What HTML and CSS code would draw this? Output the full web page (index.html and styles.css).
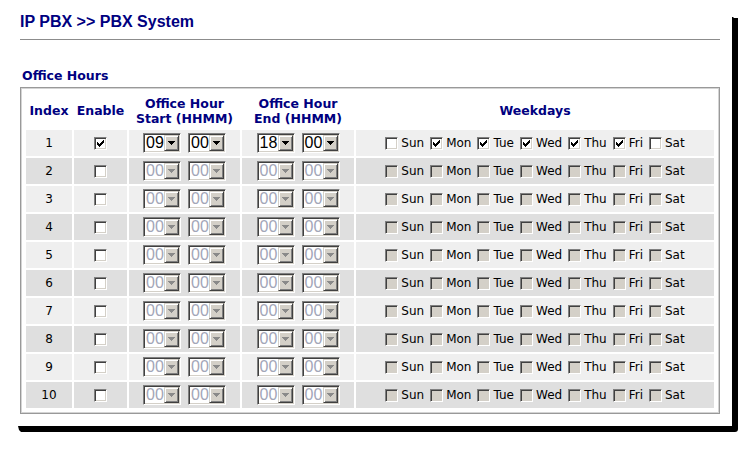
FILE: index.html
```html
<!DOCTYPE html>
<html>
<head>
<meta charset="utf-8">
<title>IP PBX - PBX System</title>
<link rel="stylesheet" href="styles.css">
</head>
<body>
<svg class="defs" width="0" height="0" aria-hidden="true">
  <symbol id="arrow" viewBox="0 0 7 4"><path d="M0 0h7v1h-1v1h-1v1h-1v1h-1v-1h-1v-1h-1v-1h-1z"/></symbol>
  <symbol id="tick" viewBox="0 0 7 7"><path d="M0 2h1v1h1v1h1v-1h1v-1h1v-1h1v-1h1v3h-1v1h-1v1h-1v1h-1v1h-1v-1h-1v-1h-1v-1h-1z"/></symbol>
</svg>
<div class="sheet">
<div class="page">
  <h1 class="title">IP PBX &gt;&gt; PBX System</h1>
  <hr class="rule">
  <div class="section">Office Hours</div>
  <div class="frame">
    <table class="hours">
      <colgroup><col class="c-idx"><col class="c-en"><col class="c-start"><col class="c-end"><col class="c-days"></colgroup>
      <thead>
        <tr><th>Index</th><th>Enable</th><th>Office Hour<br>Start (HHMM)</th><th>Office Hour<br>End (HHMM)</th><th>Weekdays</th></tr>
      </thead>
      <tbody>
        <tr>
          <td>1</td>
          <td><span class="cb on"><svg class="tk"><use href="#tick"/></svg></span></td>
          <td><div class="pair"><span class="sel"><span class="val">09</span><span class="btn"><svg class="ar"><use href="#arrow"/></svg></span></span><span class="sel"><span class="val">00</span><span class="btn"><svg class="ar"><use href="#arrow"/></svg></span></span></div></td>
          <td><div class="pair"><span class="sel"><span class="val">18</span><span class="btn"><svg class="ar"><use href="#arrow"/></svg></span></span><span class="sel"><span class="val">00</span><span class="btn"><svg class="ar"><use href="#arrow"/></svg></span></span></div></td>
          <td><div class="days">
            <span class="day"><span class="cb"></span>Sun</span>
            <span class="day"><span class="cb on"><svg class="tk"><use href="#tick"/></svg></span>Mon</span>
            <span class="day"><span class="cb on"><svg class="tk"><use href="#tick"/></svg></span>Tue</span>
            <span class="day"><span class="cb on"><svg class="tk"><use href="#tick"/></svg></span>Wed</span>
            <span class="day"><span class="cb on"><svg class="tk"><use href="#tick"/></svg></span>Thu</span>
            <span class="day"><span class="cb on"><svg class="tk"><use href="#tick"/></svg></span>Fri</span>
            <span class="day"><span class="cb"></span>Sat</span>
          </div></td>
        </tr>
        <tr>
          <td>2</td><td><span class="cb"></span></td>
          <td><div class="pair"><span class="sel off"><span class="val">00</span><span class="btn"><svg class="ar"><use href="#arrow"/></svg></span></span><span class="sel off"><span class="val">00</span><span class="btn"><svg class="ar"><use href="#arrow"/></svg></span></span></div></td>
          <td><div class="pair"><span class="sel off"><span class="val">00</span><span class="btn"><svg class="ar"><use href="#arrow"/></svg></span></span><span class="sel off"><span class="val">00</span><span class="btn"><svg class="ar"><use href="#arrow"/></svg></span></span></div></td>
          <td><div class="days"><span class="day"><span class="cb off"></span>Sun</span><span class="day"><span class="cb off"></span>Mon</span><span class="day"><span class="cb off"></span>Tue</span><span class="day"><span class="cb off"></span>Wed</span><span class="day"><span class="cb off"></span>Thu</span><span class="day"><span class="cb off"></span>Fri</span><span class="day"><span class="cb off"></span>Sat</span></div></td>
        </tr>
        <tr>
          <td>3</td><td><span class="cb"></span></td>
          <td><div class="pair"><span class="sel off"><span class="val">00</span><span class="btn"><svg class="ar"><use href="#arrow"/></svg></span></span><span class="sel off"><span class="val">00</span><span class="btn"><svg class="ar"><use href="#arrow"/></svg></span></span></div></td>
          <td><div class="pair"><span class="sel off"><span class="val">00</span><span class="btn"><svg class="ar"><use href="#arrow"/></svg></span></span><span class="sel off"><span class="val">00</span><span class="btn"><svg class="ar"><use href="#arrow"/></svg></span></span></div></td>
          <td><div class="days"><span class="day"><span class="cb off"></span>Sun</span><span class="day"><span class="cb off"></span>Mon</span><span class="day"><span class="cb off"></span>Tue</span><span class="day"><span class="cb off"></span>Wed</span><span class="day"><span class="cb off"></span>Thu</span><span class="day"><span class="cb off"></span>Fri</span><span class="day"><span class="cb off"></span>Sat</span></div></td>
        </tr>
        <tr>
          <td>4</td><td><span class="cb"></span></td>
          <td><div class="pair"><span class="sel off"><span class="val">00</span><span class="btn"><svg class="ar"><use href="#arrow"/></svg></span></span><span class="sel off"><span class="val">00</span><span class="btn"><svg class="ar"><use href="#arrow"/></svg></span></span></div></td>
          <td><div class="pair"><span class="sel off"><span class="val">00</span><span class="btn"><svg class="ar"><use href="#arrow"/></svg></span></span><span class="sel off"><span class="val">00</span><span class="btn"><svg class="ar"><use href="#arrow"/></svg></span></span></div></td>
          <td><div class="days"><span class="day"><span class="cb off"></span>Sun</span><span class="day"><span class="cb off"></span>Mon</span><span class="day"><span class="cb off"></span>Tue</span><span class="day"><span class="cb off"></span>Wed</span><span class="day"><span class="cb off"></span>Thu</span><span class="day"><span class="cb off"></span>Fri</span><span class="day"><span class="cb off"></span>Sat</span></div></td>
        </tr>
        <tr>
          <td>5</td><td><span class="cb"></span></td>
          <td><div class="pair"><span class="sel off"><span class="val">00</span><span class="btn"><svg class="ar"><use href="#arrow"/></svg></span></span><span class="sel off"><span class="val">00</span><span class="btn"><svg class="ar"><use href="#arrow"/></svg></span></span></div></td>
          <td><div class="pair"><span class="sel off"><span class="val">00</span><span class="btn"><svg class="ar"><use href="#arrow"/></svg></span></span><span class="sel off"><span class="val">00</span><span class="btn"><svg class="ar"><use href="#arrow"/></svg></span></span></div></td>
          <td><div class="days"><span class="day"><span class="cb off"></span>Sun</span><span class="day"><span class="cb off"></span>Mon</span><span class="day"><span class="cb off"></span>Tue</span><span class="day"><span class="cb off"></span>Wed</span><span class="day"><span class="cb off"></span>Thu</span><span class="day"><span class="cb off"></span>Fri</span><span class="day"><span class="cb off"></span>Sat</span></div></td>
        </tr>
        <tr>
          <td>6</td><td><span class="cb"></span></td>
          <td><div class="pair"><span class="sel off"><span class="val">00</span><span class="btn"><svg class="ar"><use href="#arrow"/></svg></span></span><span class="sel off"><span class="val">00</span><span class="btn"><svg class="ar"><use href="#arrow"/></svg></span></span></div></td>
          <td><div class="pair"><span class="sel off"><span class="val">00</span><span class="btn"><svg class="ar"><use href="#arrow"/></svg></span></span><span class="sel off"><span class="val">00</span><span class="btn"><svg class="ar"><use href="#arrow"/></svg></span></span></div></td>
          <td><div class="days"><span class="day"><span class="cb off"></span>Sun</span><span class="day"><span class="cb off"></span>Mon</span><span class="day"><span class="cb off"></span>Tue</span><span class="day"><span class="cb off"></span>Wed</span><span class="day"><span class="cb off"></span>Thu</span><span class="day"><span class="cb off"></span>Fri</span><span class="day"><span class="cb off"></span>Sat</span></div></td>
        </tr>
        <tr>
          <td>7</td><td><span class="cb"></span></td>
          <td><div class="pair"><span class="sel off"><span class="val">00</span><span class="btn"><svg class="ar"><use href="#arrow"/></svg></span></span><span class="sel off"><span class="val">00</span><span class="btn"><svg class="ar"><use href="#arrow"/></svg></span></span></div></td>
          <td><div class="pair"><span class="sel off"><span class="val">00</span><span class="btn"><svg class="ar"><use href="#arrow"/></svg></span></span><span class="sel off"><span class="val">00</span><span class="btn"><svg class="ar"><use href="#arrow"/></svg></span></span></div></td>
          <td><div class="days"><span class="day"><span class="cb off"></span>Sun</span><span class="day"><span class="cb off"></span>Mon</span><span class="day"><span class="cb off"></span>Tue</span><span class="day"><span class="cb off"></span>Wed</span><span class="day"><span class="cb off"></span>Thu</span><span class="day"><span class="cb off"></span>Fri</span><span class="day"><span class="cb off"></span>Sat</span></div></td>
        </tr>
        <tr>
          <td>8</td><td><span class="cb"></span></td>
          <td><div class="pair"><span class="sel off"><span class="val">00</span><span class="btn"><svg class="ar"><use href="#arrow"/></svg></span></span><span class="sel off"><span class="val">00</span><span class="btn"><svg class="ar"><use href="#arrow"/></svg></span></span></div></td>
          <td><div class="pair"><span class="sel off"><span class="val">00</span><span class="btn"><svg class="ar"><use href="#arrow"/></svg></span></span><span class="sel off"><span class="val">00</span><span class="btn"><svg class="ar"><use href="#arrow"/></svg></span></span></div></td>
          <td><div class="days"><span class="day"><span class="cb off"></span>Sun</span><span class="day"><span class="cb off"></span>Mon</span><span class="day"><span class="cb off"></span>Tue</span><span class="day"><span class="cb off"></span>Wed</span><span class="day"><span class="cb off"></span>Thu</span><span class="day"><span class="cb off"></span>Fri</span><span class="day"><span class="cb off"></span>Sat</span></div></td>
        </tr>
        <tr>
          <td>9</td><td><span class="cb"></span></td>
          <td><div class="pair"><span class="sel off"><span class="val">00</span><span class="btn"><svg class="ar"><use href="#arrow"/></svg></span></span><span class="sel off"><span class="val">00</span><span class="btn"><svg class="ar"><use href="#arrow"/></svg></span></span></div></td>
          <td><div class="pair"><span class="sel off"><span class="val">00</span><span class="btn"><svg class="ar"><use href="#arrow"/></svg></span></span><span class="sel off"><span class="val">00</span><span class="btn"><svg class="ar"><use href="#arrow"/></svg></span></span></div></td>
          <td><div class="days"><span class="day"><span class="cb off"></span>Sun</span><span class="day"><span class="cb off"></span>Mon</span><span class="day"><span class="cb off"></span>Tue</span><span class="day"><span class="cb off"></span>Wed</span><span class="day"><span class="cb off"></span>Thu</span><span class="day"><span class="cb off"></span>Fri</span><span class="day"><span class="cb off"></span>Sat</span></div></td>
        </tr>
        <tr>
          <td>10</td><td><span class="cb"></span></td>
          <td><div class="pair"><span class="sel off"><span class="val">00</span><span class="btn"><svg class="ar"><use href="#arrow"/></svg></span></span><span class="sel off"><span class="val">00</span><span class="btn"><svg class="ar"><use href="#arrow"/></svg></span></span></div></td>
          <td><div class="pair"><span class="sel off"><span class="val">00</span><span class="btn"><svg class="ar"><use href="#arrow"/></svg></span></span><span class="sel off"><span class="val">00</span><span class="btn"><svg class="ar"><use href="#arrow"/></svg></span></span></div></td>
          <td><div class="days"><span class="day"><span class="cb off"></span>Sun</span><span class="day"><span class="cb off"></span>Mon</span><span class="day"><span class="cb off"></span>Tue</span><span class="day"><span class="cb off"></span>Wed</span><span class="day"><span class="cb off"></span>Thu</span><span class="day"><span class="cb off"></span>Fri</span><span class="day"><span class="cb off"></span>Sat</span></div></td>
        </tr>
      </tbody>
    </table>
  </div>
</div>
</div>
</body>
</html>
```
FILE: styles.css
```css
body {
  margin: 0;
  background: #fff;
  font-family: "DejaVu Sans", Verdana, sans-serif;
  font-size: 12px;
  color: #000;
}

.defs {
  position: absolute;
  width: 0;
  height: 0;
  overflow: hidden;
}

/* sheet = white page area + black drop shadow (offset 6px) */
.sheet {
  width: 726px;
  height: 421px;
  margin: 11px 0 0 12px;
  background: #000;
  border-radius: 0 0 3px 0;
  clip-path: polygon(0 0, 720px 0, 720px 6px, 721px 6px, 722px 7px, 726px 7px, 726px 100%, 9px 100%, 7px 419px, 6px 415px, 0 415px);
}

.page {
  width: 720px;
  height: 415px;
  padding: 2px 12px 0 8px;
  box-sizing: border-box;
  background: #fff;
}

.title {
  margin: 0;
  font: bold 16px/18px "Liberation Sans", Arial, sans-serif;
  color: #000080;
}

.rule {
  margin: 8px 0 0;
  border: 0;
  height: 1px;
  background: #8c8c8c;
}

.section {
  margin-top: 29px;
  padding-left: 2px;
  font-size: 12.5px;
  font-weight: bold;
  line-height: 14px;
  color: #000080;
}

.frame {
  margin-top: 4px;
  border: 1px solid #999;
  padding: 3px;
  box-shadow: inset 0 0 0 1px #d4d4d4;
}

.hours {
  border-collapse: separate;
  border-spacing: 2px;
  table-layout: fixed;
  width: 692px;
}

.c-idx { width: 46px; }
.c-en { width: 53px; }
.c-start { width: 111px; }
.c-end { width: 112px; }
.c-days { width: 358px; }

.hours th {
  height: 35px;
  padding: 0;
  color: #000080;
  font-size: 12.5px;
  font-weight: bold;
  line-height: 15px;
  text-align: center;
  vertical-align: middle;
}

.hours td {
  height: 26px;
  padding: 0;
  text-align: center;
  vertical-align: middle;
  background: #efefef;
  line-height: 14px;
}

.hours tbody tr:nth-child(even) td {
  background: #dfdfdf;
}

/* classic checkbox */
.cb {
  display: inline-flex;
  align-items: center;
  justify-content: center;
  width: 13px;
  height: 13px;
  box-sizing: border-box;
  background: #fff;
  border: 1px solid;
  border-color: #808080 #fff #fff #808080;
  box-shadow: inset 1px 1px #404040, inset -1px -1px #d4d0c8;
  vertical-align: middle;
}

.cb.off {
  background: #d4d0c8;
}

.tk {
  width: 7px;
  height: 7px;
  fill: #000;
  shape-rendering: crispEdges;
}

/* classic dropdown */
.pair {
  display: flex;
  justify-content: center;
  gap: 7px;
}

.sel {
  display: inline-flex;
  width: 38px;
  height: 20px;
  box-sizing: border-box;
  padding: 1px;
  background: #fff;
  border: 1px solid;
  border-color: #808080 #fff #fff #808080;
  box-shadow: inset 1px 1px #404040, inset -1px -1px #d4d0c8;
}

.val {
  flex: 1;
  text-align: left;
  padding-left: 1px;
  font: 16px/16px "Liberation Sans", Arial, sans-serif;
  color: #000;
}

.sel.off .val {
  color: #a3a6b8;
}

.btn {
  display: flex;
  align-items: center;
  justify-content: center;
  width: 15px;
  height: 16px;
  box-sizing: border-box;
  background: #d4d0c8;
  border: 1px solid;
  border-color: #d4d0c8 #404040 #404040 #d4d0c8;
  box-shadow: inset 1px 1px #fff, inset -1px -1px #808080;
}

.ar {
  width: 7px;
  height: 4px;
  fill: #000;
  shape-rendering: crispEdges;
}

.sel.off .ar {
  fill: #8a8a8a;
}

/* weekdays */
.days {
  display: flex;
  justify-content: center;
  align-items: center;
  gap: 6px;
}

.day {
  display: inline-flex;
  align-items: center;
}

.day .cb {
  margin-right: 3px;
}
```
